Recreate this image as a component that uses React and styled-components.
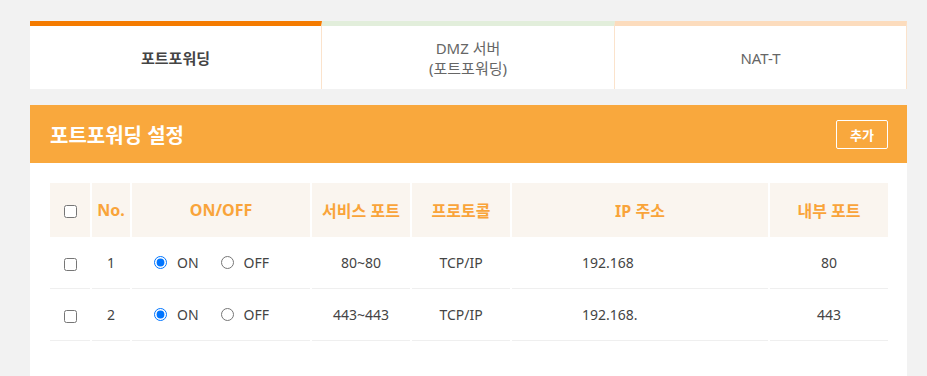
import React from 'react';
import styled, { createGlobalStyle } from 'styled-components';

const GlobalStyle = createGlobalStyle`
  body {
    margin: 0;
    background: #f2f2f2;
    font-family: "Noto Sans", "Noto Sans CJK KR", sans-serif;
  }
`;

const Page = styled.div`
  padding: 21px 20px 0 30px;
  width: 877px;
`;

const Tabs = styled.div`
  display: grid;
  grid-template-columns: 292px 293px 292px;
`;

const Tab = styled.div`
  height: 63px;
  background: #fff;
  border-top: 5px solid ${({ $line }) => $line};
  border-right: 1px solid #fbe3cc;
  display: flex;
  align-items: center;
  justify-content: center;
  text-align: center;
  font-size: 15px;
  line-height: 20px;
  color: ${({ $active }) => ($active ? '#444' : '#666')};
  font-weight: ${({ $active }) => ($active ? 700 : 400)};
  box-sizing: content-box;
  &:last-child {
    width: 291px;
  }
`;

const Header = styled.div`
  margin-top: 16px;
  height: 58px;
  background: #f9a83d;
  display: flex;
  align-items: center;
  justify-content: space-between;
  padding: 0 19px 0 20px;
`;

const Title = styled.h2`
  margin: 0;
  color: #fff;
  font-size: 20px;
  font-weight: 700;
`;

const AddButton = styled.button`
  width: 52px;
  height: 29px;
  background: transparent;
  border: 1px solid #fff;
  border-radius: 2px;
  color: #fff;
  font-family: inherit;
  font-size: 13px;
  font-weight: 700;
  padding: 0;
`;

const Panel = styled.div`
  background: #fff;
  padding: 20px 19px 40px 20px;
`;

const Table = styled.table`
  width: 842px;
  margin: 0 -2px;
  border-collapse: separate;
  border-spacing: 2px 0;
  table-layout: fixed;
`;

const Th = styled.th`
  height: 54px;
  padding: 0;
  background: #faf5ef;
  color: #f9a43a;
  font-size: 16px;
  font-weight: 700;
  text-align: center;
`;

const Td = styled.td`
  height: 51px;
  padding: 0;
  border-bottom: 1px solid #efefef;
  color: #444;
  font-size: 14px;
  text-align: ${({ $align }) => $align || 'center'};
  padding-left: ${({ $pl }) => $pl || 0}px;
`;

const Check = styled.input.attrs({ type: 'checkbox' })`
  width: 13px;
  height: 13px;
  margin: 0;
  vertical-align: middle;
`;

const Switch = styled.div`
  display: flex;
  align-items: center;
  padding-left: 22px;
`;

const RadioLabel = styled.label`
  display: flex;
  align-items: center;
  gap: 10px;
  margin-right: 22px;
  color: #444;
  font-size: 14px;
  input {
    margin: 0;
    width: 13px;
    height: 13px;
  }
`;

const rows = [
  { no: 1, port: '80~80', proto: 'TCP/IP', ip: '192.168', inner: '80' },
  { no: 2, port: '443~443', proto: 'TCP/IP', ip: '192.168.', inner: '443' },
];

const App = () => {
  return (
    <>
      <GlobalStyle />
      <Page>
        <Tabs>
          <Tab $line="#f47b00" $active>포트포워딩</Tab>
          <Tab $line="#e2eedb">DMZ 서버<br />(포트포워딩)</Tab>
          <Tab $line="#fcdcbd">NAT-T</Tab>
        </Tabs>
        <Header>
          <Title>포트포워딩 설정</Title>
          <AddButton>추가</AddButton>
        </Header>
        <Panel>
          <Table>
            <colgroup>
              <col style={{ width: 40 }} />
              <col style={{ width: 38 }} />
              <col style={{ width: 178 }} />
              <col style={{ width: 98 }} />
              <col style={{ width: 98 }} />
              <col style={{ width: 256 }} />
              <col style={{ width: 118 }} />
            </colgroup>
            <thead>
              <tr>
                <Th><Check /></Th>
                <Th>No.</Th>
                <Th>ON/OFF</Th>
                <Th>서비스 포트</Th>
                <Th>프로토콜</Th>
                <Th>IP 주소</Th>
                <Th>내부 포트</Th>
              </tr>
            </thead>
            <tbody>
              {rows.map((r) => (
                <tr key={r.no}>
                  <Td><Check /></Td>
                  <Td>{r.no}</Td>
                  <Td $align="left">
                    <Switch>
                      <RadioLabel>
                        <input type="radio" name={`sw${r.no}`} defaultChecked />
                        ON
                      </RadioLabel>
                      <RadioLabel>
                        <input type="radio" name={`sw${r.no}`} />
                        OFF
                      </RadioLabel>
                    </Switch>
                  </Td>
                  <Td>{r.port}</Td>
                  <Td>{r.proto}</Td>
                  <Td $align="left" $pl={70}>{r.ip}</Td>
                  <Td>{r.inner}</Td>
                </tr>
              ))}
            </tbody>
          </Table>
        </Panel>
      </Page>
    </>
  );
};

export default App;
